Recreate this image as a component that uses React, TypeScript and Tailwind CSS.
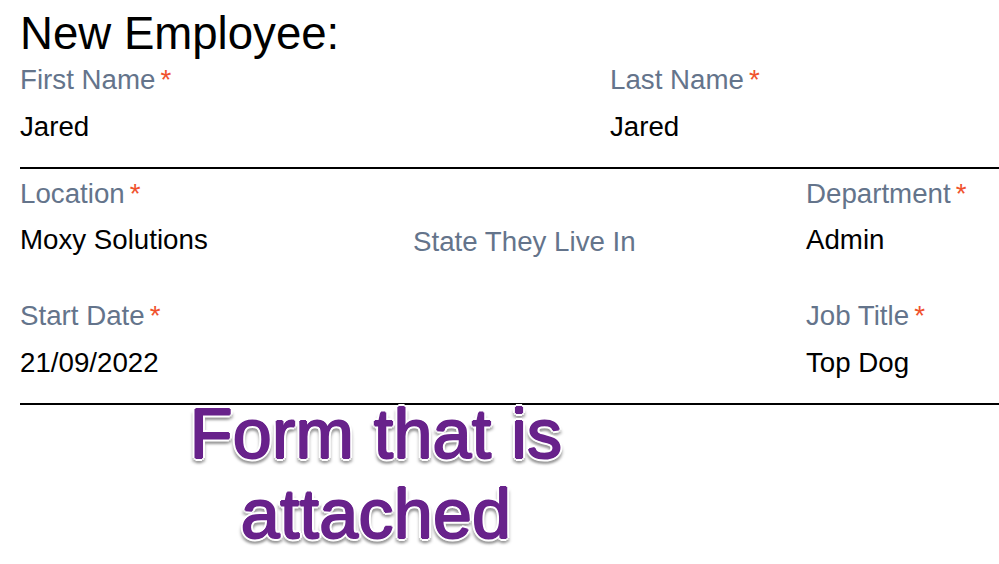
export default function App() {
  return (
    <div className="w-[999px] h-[564px] overflow-hidden bg-white font-['Liberation_Sans',sans-serif] pl-5">
      <h1 className="text-[45.6px] leading-[52px] pt-[8px] h-[64px] text-black">New Employee:</h1>
      <div className="flex h-[105px] border-b-2 border-black">
        <Field w="w-[590px]" label="First Name" value="Jared" />
        <Field w="flex-1" label="Last Name" value="Jared" />
      </div>
      <div className="flex pt-[9px]">
        <Field w="w-[393px]" label="Location" value="Moxy Solutions" gap="mt-[14px]" />
        <div className="w-[393px] pt-[48px] text-[27.7px] leading-[32px] text-[#64748b]">State They Live In</div>
        <Field w="flex-1" label="Department" value="Admin" gap="mt-[14px]" />
      </div>
      <div className="flex pt-[42px] h-[147px] border-b-2 border-black">
        <Field w="w-[786px]" label="Start Date" value="21/09/2022" />
        <Field w="flex-1" label="Job Title" value="Top Dog" />
      </div>
      <div className="w-[712px] mt-[-11px] text-center text-[70px] tracking-[0.25px] leading-[80px] text-[#68228b] [text-shadow:1px_0_0_#68228b,-1px_0_0_#68228b,0_1px_0_#68228b,0_-1px_0_#68228b,-3px_0_0_#fff,3px_0_0_#fff,0_-3px_0_#fff,0_3px_0_#fff,-2px_-2px_0_#fff,2px_-2px_0_#fff,-2px_2px_0_#eee,2px_2px_0_#eee,0_5px_3px_#999,-3px_4px_3px_#aaa,3px_4px_3px_#aaa]">
        Form that is<br />attached
      </div>
    </div>
  );
}

function Field({ w, label, value, gap = "mt-[15px]" }: { w: string; label: string; value: string; gap?: string }) {
  return (
    <div className={w}>
      <div className="text-[27.7px] leading-[32px] text-[#64748b]">
        {label}
        <span className="text-[#f0522d] ml-[5px]">*</span>
      </div>
      <div className={`text-[27.7px] leading-[32px] text-black ${gap}`}>{value}</div>
    </div>
  );
}
